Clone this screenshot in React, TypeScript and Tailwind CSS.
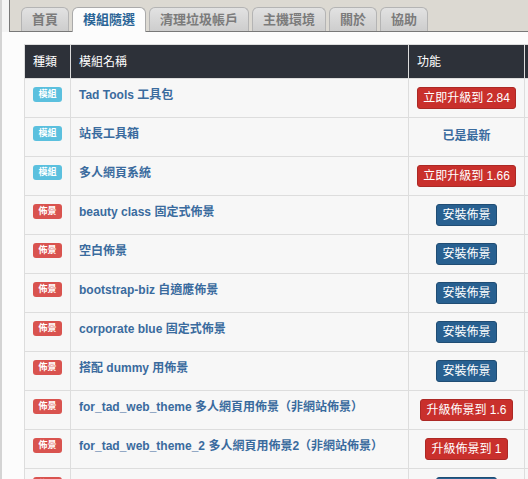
import React from "react"

const tabs = ["首頁", "模組隨選", "清理垃圾帳戶", "主機環境", "關於", "協助"]

type Row = {
  kind: "mod" | "theme"
  name: string
  action: { type: "red" | "blue" | "text"; label: string }
}

const rows: Row[] = [
  { kind: "mod", name: "Tad Tools 工具包", action: { type: "red", label: "立即升級到 2.84" } },
  { kind: "mod", name: "站長工具箱", action: { type: "text", label: "已是最新" } },
  { kind: "mod", name: "多人網頁系統", action: { type: "red", label: "立即升級到 1.66" } },
  { kind: "theme", name: "beauty class 固定式佈景", action: { type: "blue", label: "安裝佈景" } },
  { kind: "theme", name: "空白佈景", action: { type: "blue", label: "安裝佈景" } },
  { kind: "theme", name: "bootstrap-biz 自適應佈景", action: { type: "blue", label: "安裝佈景" } },
  { kind: "theme", name: "corporate blue 固定式佈景", action: { type: "blue", label: "安裝佈景" } },
  { kind: "theme", name: "搭配 dummy 用佈景", action: { type: "blue", label: "安裝佈景" } },
  { kind: "theme", name: "for_tad_web_theme 多人網頁用佈景（非網站佈景）", action: { type: "red", label: "升級佈景到 1.6" } },
  { kind: "theme", name: "for_tad_web_theme_2 多人網頁用佈景2（非網站佈景）", action: { type: "red", label: "升級佈景到 1" } },
  { kind: "theme", name: "", action: { type: "blue", label: "安裝佈景" } },
]

function Badge({ kind }: { kind: Row["kind"] }) {
  return (
    <span
      className={
        "inline-flex h-[15px] w-[29px] items-center justify-center rounded-[3px] text-[9px] font-bold leading-none text-white " +
        (kind === "mod" ? "bg-[#5bc0de]" : "bg-[#d9534f]")
      }
    >
      {kind === "mod" ? "模組" : "佈景"}
    </span>
  )
}

function Action({ action }: { action: Row["action"] }) {
  if (action.type === "text") {
    return <span className="block pt-[1px] font-bold text-[#3a6b9e]">{action.label}</span>
  }
  return (
    <span
      className={
        "inline-block h-[22px] rounded-[3px] border px-[5px] text-[12px] leading-[20px] text-white " +
        (action.type === "red" ? "border-[#ac2925] bg-[#c9302c]" : "border-[#204d74] bg-[#286090]")
      }
    >
      {action.label}
    </span>
  )
}

export default function App() {
  return (
    <div
      className="flex h-[479px] w-[528px] overflow-hidden bg-[#fcfcfc] text-[12px]"
      style={{ fontFamily: '"Liberation Sans", Arial, "Noto Sans CJK TC", sans-serif' }}
    >
      {/* left frame edge */}
      <div className="w-[2px] shrink-0 bg-[#d4d4d4]" />

      <div className="flex min-w-0 flex-1 flex-col">
        <div className="flex bg-[#f4f4f4] pl-[7px]">
          <div className="flex h-[32px] flex-1 items-end gap-[3px] border-b border-l border-[#787878] bg-[#dcd9d2] pl-[11px]">
            {tabs.map((t, i) =>
              i === 1 ? (
                <div
                  key={t}
                  className="relative -mb-px flex h-[25px] items-center rounded-t-[6px] border border-b-0 border-[#aaa] bg-[#fcfcfc] px-[10px] text-[13px] font-bold text-[#2a6496]"
                >
                  {t}
                </div>
              ) : (
                <div
                  key={t}
                  className="flex h-[24px] items-center rounded-t-[6px] border border-b-0 border-[#b4b4b4] bg-gradient-to-b from-[#e2e2e2] to-[#cdcdcd] px-[10px] text-[13px] font-bold text-[#7b7b7b]"
                >
                  {t}
                </div>
              )
            )}
          </div>
        </div>

        <div className="pl-[22px] pt-[12px]">
          <table className="w-[620px] table-fixed border-collapse">
            <colgroup>
              <col className="w-[46px]" />
              <col className="w-[338px]" />
              <col className="w-[116px]" />
              <col />
            </colgroup>
            <thead>
              <tr className="h-[34px] bg-[#2d3139] text-left text-white">
                <th className="border border-[#ddd] px-[8px] font-normal">種類</th>
                <th className="border border-[#ddd] px-[8px] font-normal">模組名稱</th>
                <th className="border border-[#ddd] px-[8px] font-normal">功能</th>
                <th className="border border-[#ddd] px-[8px] font-normal"></th>
              </tr>
            </thead>
            <tbody>
              {rows.map((r, i) => (
                <tr key={i} className="h-[39px] bg-[#f7f7f7]">
                  <td className="border border-[#ddd] px-[8px] pt-[5px] align-top">
                    <Badge kind={r.kind} />
                  </td>
                  <td className="border border-[#ddd] px-[8px] pt-[7px] align-top font-bold text-[#3a6b9e]">
                    {r.name}
                  </td>
                  <td className="border border-[#ddd] px-[4px] pt-[8px] text-center align-top">
                    <Action action={r.action} />
                  </td>
                  <td className="border border-[#ddd]"></td>
                </tr>
              ))}
            </tbody>
          </table>
        </div>
      </div>
    </div>
  )
}
